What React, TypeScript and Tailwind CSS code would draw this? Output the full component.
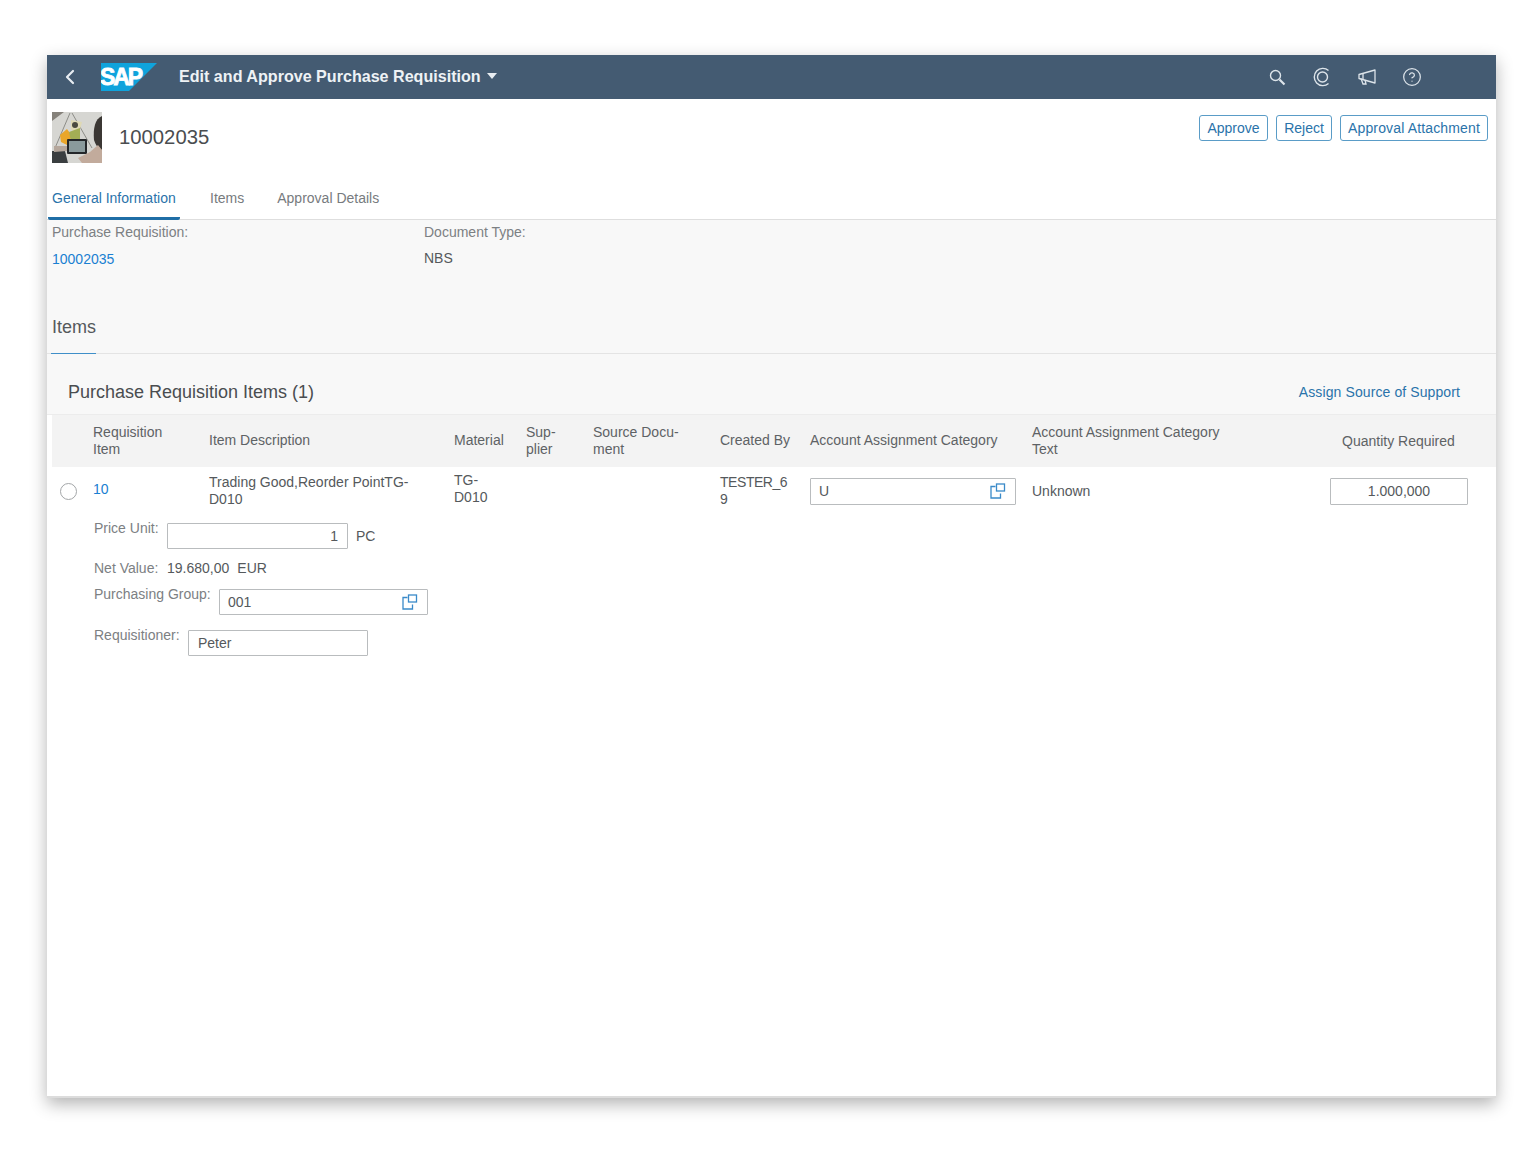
import { ChevronLeft, CircleHelp } from "lucide-react";

const ValueHelp = () => (
  <svg width="16" height="16" viewBox="0 0 16 16" fill="none" stroke="#3a8ac9" strokeWidth="1.3">
    <path d="M5.5 3.5H1V15H10.5V10.5" />
    <rect x="6.5" y="1" width="8" height="7" />
  </svg>
);

const Thumbnail = () => (
  <svg width="50" height="51" viewBox="0 0 50 51" className="shrink-0 blur-[0.5px]">
    <rect width="50" height="51" fill="#d6d6d2" />
    <path d="M0 0H12L0 9Z" fill="#85817a" />
    <path d="M18 1L3 36M20 1L40 36" stroke="#8d8d88" strokeWidth="1" fill="none" />
    <path d="M19 8L30 10L27 21L19 18Z" fill="#dfd9b4" />
    <circle cx="23" cy="13" r="3" fill="#4b4a40" />
    <path d="M8 23L15 17L20 24L15 33L9 30Z" fill="#eaa62a" />
    <path d="M17 20L28 16L28 27L19 29Z" fill="#a3ae55" />
    <rect x="15" y="27" width="20" height="15" rx="1" fill="#24272a" />
    <rect x="17" y="29" width="16" height="11" fill="#8a9a9c" />
    <path d="M0 39H13L16 51H0Z" fill="#3a3e40" />
    <path d="M2 34L15 34L15 39L2 40Z" fill="#b5a79c" />
    <path d="M50 4C43 7 41 16 42 28C44 34 46 36 50 38Z" fill="#3b3734" />
    <path d="M38 40L46 33L50 38V51H30L26 46Z" fill="#c2ab9c" />
  </svg>
);

const SapLogo = () => (
  <svg width="56" height="28" viewBox="0 0 56 28">
    <path d="M0 0H56L28 28H0Z" fill="#0fa3dc" />
    <text x="-1" y="22" fontFamily="Liberation Sans, sans-serif" fontWeight="700" fontSize="23" fill="#fff" stroke="#fff" strokeWidth="0.8" textLength="43">
      SAP
    </text>
  </svg>
);

const SearchIcon = () => (
  <svg width="19" height="19" viewBox="0 0 19 19" fill="none" stroke="#dde4ea">
    <circle cx="7.5" cy="7.5" r="5" strokeWidth="1.4" />
    <path d="M11.5 11.5L16.5 16.5" strokeWidth="2.2" />
  </svg>
);

const Campaign = () => (
  <svg width="20" height="20" viewBox="0 0 20 20" fill="none" stroke="#dde4ea" strokeWidth="1.3">
    <path d="M2 7.5L18 3V16L2 11.5Z" strokeLinejoin="round" />
    <path d="M6 6.5V12.5M4 11.5L6 17H9L8 13" />
  </svg>
);

const Notifications = () => (
  <svg width="20" height="20" viewBox="0 0 20 20" fill="none" stroke="#dde4ea" strokeWidth="1.4">
    <path d="M16.5 16.5A8.6 8.6 0 1 1 16.5 3.5" />
    <circle cx="10.5" cy="10" r="5" />
  </svg>
);

const ActionButton = ({ label, width }: { label: string; width: string }) => (
  <button className={`${width} h-[26px] rounded-[3px] border border-[#5a9cc7] text-[14px] text-[#2a73aa] bg-white`}>
    {label}
  </button>
);

const App = () => {
  return (
    <div
      className="w-[1536px] h-[1154px] bg-white pt-[55px] pl-[47px] overflow-hidden text-[14px] text-[#55595c]"
      style={{ fontFamily: '"Liberation Sans", Arial, sans-serif' }}
    >
      <div className="w-[1449px] h-[1043px] bg-white flex flex-col border-b-2 border-[#dcdcdc] shadow-[0_6px_16px_rgba(0,0,0,0.3)]">
        <header className="h-[44px] shrink-0 bg-[#445b72] flex items-center text-white">
          <ChevronLeft size={24} strokeWidth={2.2} className="ml-[11px] text-[#e8edf2]" />
          <div className="ml-[19px]">
            <SapLogo />
          </div>
          <div className="ml-[22px] -mt-px text-[16.1px] font-bold text-[#eef2f5] flex items-center">
            Edit and Approve Purchase Requisition
            <span className="ml-[6px] w-0 h-0 border-x-[5px] border-x-transparent border-t-[6px] border-t-[#e8edf2]" />
          </div>
          <div className="ml-auto mr-[74px] flex items-center gap-[25px] text-[#dde4ea]">
            <SearchIcon />
            <Notifications />
            <Campaign />
            <CircleHelp size={20} strokeWidth={1.5} />
          </div>
        </header>

        <section className="h-[121px] shrink-0 flex flex-col border-b border-[#dedede]">
          <div className="flex items-start pl-[5px] pr-[8px] pt-[13px]">
            <Thumbnail />
            <h1 className="ml-[17px] mt-[10px] text-[20.3px] font-normal text-[#4a4d50]">10002035</h1>
            <div className="ml-auto mt-[3px] flex gap-[8px]">
              <ActionButton label="Approve" width="w-[69px]" />
              <ActionButton label="Reject" width="w-[56px]" />
              <ActionButton label="Approval Attachment" width="w-[148px] tracking-[0.15px]" />
            </div>
          </div>
          <nav className="mt-auto -mb-px h-[36px] flex items-start pl-px text-[#777b7e]">
            <div className="h-[36px] w-[132px] pl-[4px] pt-[4px] text-[#2a73aa] border-b-[3px] border-[#1f6ea6] rounded-b-[2px]">
              General Information
            </div>
            <div className="ml-[30px] pt-[4px]">Items</div>
            <div className="ml-[33px] pt-[4px]">Approval Details</div>
          </nav>
        </section>

        <section className="h-[134px] shrink-0 bg-[#f8f8f8] flex flex-col border-b border-[#e4e4e4]">
          <div className="flex pl-[5px] pt-[2px]">
            <div className="w-[372px]">
              <div className="text-[#7c8083]">Purchase Requisition:</div>
              <div className="mt-[6px] text-[#1a80d2]">10002035</div>
            </div>
            <div>
              <div className="text-[#7c8083]">Document Type:</div>
              <div className="mt-[5px]">NBS</div>
            </div>
          </div>
          <div className="relative mt-auto -mb-px ml-[4px] w-[45px] h-[41px] border-b border-[#3f8fc9] text-[18px] text-[#55595c] pt-px pl-px">
            Items
          </div>
        </section>

        <section className="h-[61px] shrink-0 bg-[#f8f8f8] flex items-center justify-between pl-[21px] pr-[36px] pt-[16px] border-b border-[#ececec]">
          <h2 className="text-[18px] font-normal text-[#4a4d50]">Purchase Requisition Items (1)</h2>
          <span className="text-[#2a73aa] tracking-[0.1px]">Assign Source of Support</span>
        </section>

        <div className="pl-[5px]">
          <div className="h-[52px] bg-[#f3f3f3] grid grid-cols-[41px_116px_245px_72px_67px_127px_90px_222px_298px_1fr] items-center leading-[17px] text-[#5e6265]">
            <div />
            <div>
              Requisition
              <br />
              Item
            </div>
            <div className="-mt-[2px]">Item Description</div>
            <div className="-mt-[2px]">Material</div>
            <div>
              Sup-
              <br />
              plier
            </div>
            <div>
              Source Docu-
              <br />
              ment
            </div>
            <div className="-mt-[2px]">Created By</div>
            <div className="-mt-px">Account Assignment Category</div>
            <div>
              Account Assignment Category
              <br />
              Text
            </div>
            <div className="pl-[12px]">Quantity Required</div>
          </div>

          <div className="h-[48px] grid grid-cols-[41px_116px_245px_72px_67px_127px_90px_222px_298px_1fr] items-center leading-[17px]">
            <div className="pl-[8px]">
              <div className="w-[17px] h-[17px] rounded-full border border-[#a3a6a8] bg-white" />
            </div>
            <div className="text-[#1a80d2] -mt-[4px]">10</div>
            <div>
              Trading Good,Reorder PointTG-
              <br />
              D010
            </div>
            <div className="-mt-[4px]">
              TG-
              <br />
              D010
            </div>
            <div />
            <div />
            <div className="tracking-[-0.45px]">
              TESTER_6
              <br />9
            </div>
            <div className="w-[206px] h-[27px] pl-[8px] pr-[9px] border border-[#b9bcbe] rounded-[1px] bg-white flex items-center justify-between">
              U
              <ValueHelp />
            </div>
            <div>Unknown</div>
            <div className="w-[138px] h-[27px] border border-[#b9bcbe] rounded-[1px] bg-white flex items-center justify-center">
              1.000,000
            </div>
          </div>

          <div className="pl-[42px]">
            <div className="flex items-start h-[43px] pt-[8px]">
              <span className="text-[#7c8083] w-[73px] -mt-[5px]">Price Unit:</span>
              <div className="w-[181px] h-[26px] pr-[9px] border border-[#b9bcbe] rounded-[1px] flex items-center justify-end">
                1
              </div>
              <span className="ml-[8px] pt-[3px]">PC</span>
            </div>
            <div className="flex h-[21px] items-center">
              <span className="text-[#7c8083] w-[73px]">Net Value:</span>
              <span>19.680,00</span>
              <span className="ml-[8px]">EUR</span>
            </div>
            <div className="flex items-start h-[51px] pt-[10px]">
              <span className="text-[#7c8083] w-[125px] -mt-[5px]">Purchasing Group:</span>
              <div className="w-[209px] h-[26px] pl-[8px] pr-[9px] border border-[#b9bcbe] rounded-[1px] flex items-center justify-between">
                001
                <ValueHelp />
              </div>
            </div>
            <div className="flex items-start">
              <span className="text-[#7c8083] w-[94px] -mt-[5px]">Requisitioner:</span>
              <div className="w-[180px] h-[26px] px-[9px] border border-[#b9bcbe] rounded-[1px] flex items-center">
                Peter
              </div>
            </div>
          </div>
        </div>
      </div>
    </div>
  );
};

export default App;
